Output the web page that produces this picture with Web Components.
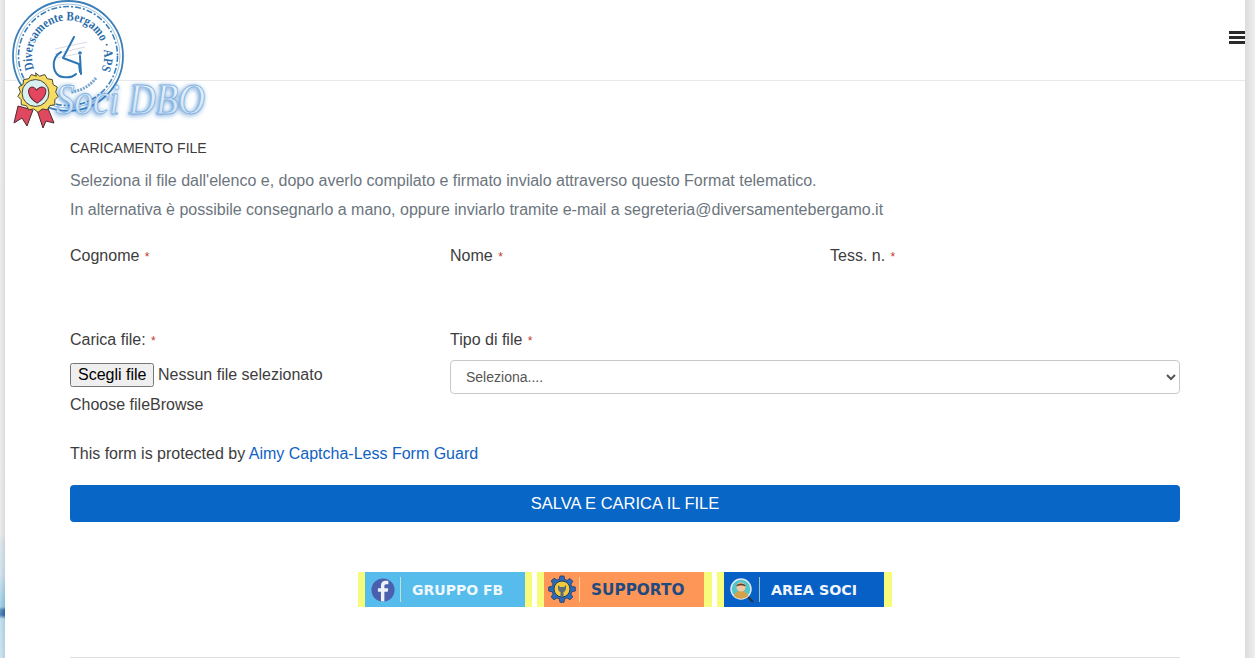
<!DOCTYPE html>
<html lang="it">
<head>
<meta charset="utf-8">
<title>Caricamento file</title>
<style>
  html, body { margin: 0; height: 100%; overflow: hidden; }
  body {
    font-family: "Liberation Sans", Arial, sans-serif;
    color: #3d3d3d;
    background: #fff;
  }
</style>
</head>
<body>
<page-shell>
  <top-bar slot="header"></top-bar>
  <upload-form></upload-form>
  <banner-row></banner-row>
</page-shell>

<script>
class PageShell extends HTMLElement {
  constructor() {
    super();
    this.attachShadow({ mode: 'open' });
    this.shadowRoot.innerHTML = `
      <style>
        :host {
          display: grid;
          grid-template-columns: 5px 1fr 10px;
          height: 658px;
          overflow: hidden;
        }
        .side-left {
          background:
            linear-gradient(90deg, rgba(255,255,255,.25), rgba(0,0,0,.05)),
            linear-gradient(180deg, #e9e9e9 0, #e6e6e6 535px, #d3dfe6 542px, #c8dbe6 575px, #a6cfe5 590px, #8cc2e0 607px, #2f6fa8 610px, #2563a8 615px, #b4d8ea 619px, #c0dcec 658px);
        }
        .side-right { background: linear-gradient(90deg, #dcdcdc, #eeeeee); }
        main { background: #fff; min-width: 0; }
        .content { padding: 0 65px; }
      </style>
      <div class="side-left"></div>
      <main>
        <slot name="header"></slot>
        <div class="content"><slot></slot></div>
      </main>
      <div class="side-right"></div>
    `;
  }
}

class TopBar extends HTMLElement {
  constructor() {
    super();
    this.attachShadow({ mode: 'open' });
    this.shadowRoot.innerHTML = `
      <style>
        :host {
          display: flex;
          justify-content: flex-end;
          align-items: center;
          height: 80px;
          border-bottom: 1px solid #e9e9e9;
          position: relative;
        }
        .logo { position: absolute; left: 0; top: 0; overflow: visible; }
        .menu { width: 16px; margin-top: -3px; }
        .menu i { display: block; height: 3px; background: #2b2b2b; margin-bottom: 2px; }
      </style>
      <svg class="logo" width="205" height="130" viewBox="0 0 205 130">
        <defs>
          <path id="ring" d="M 29.300 69 A 36 36 0 1 1 96.700 69"/>
          <filter id="glow" x="-20%" y="-40%" width="140%" height="180%">
            <feGaussianBlur stdDeviation="2.400"/>
          </filter>
          <linearGradient id="soci" x1="0" y1="0" x2="0" y2="1">
            <stop offset="0" stop-color="#f6fafd"/>
            <stop offset="1" stop-color="#c4dbf1"/>
          </linearGradient>
        </defs>
        <circle cx="63" cy="56" r="55" fill="#fff" stroke="#3d7fb8" stroke-width="1.800"/>
        <circle cx="63" cy="56" r="52" fill="none" stroke="#8ab4d8" stroke-width=".8"/>
        <circle cx="63" cy="56" r="49.500" fill="none" stroke="#3d7fb8" stroke-width="1.600" stroke-dasharray="6 2 2 2"/>
        <text font-family="Liberation Serif, serif" font-size="13" font-weight="700" fill="#2a6cab">
          <textPath href="#ring" textLength="140" lengthAdjust="spacingAndGlyphs">Diversamente Bergamo · APS</textPath>
        </text>
        <path d="M91 78 A 36 36 0 0 1 66 92" fill="none" stroke="#7ea7cc" stroke-width="3" stroke-dasharray="2 1"/>
        <g fill="none" stroke="#c2cdd8" stroke-width=".7">
          <path d="M50 49 L82 42M50 54 L80 47M52 58 L76 53"/>
        </g>
        <g fill="none" stroke="#2c75b6" stroke-width="2" stroke-linecap="round" stroke-linejoin="round">
          <path d="M69 37 L58 58 L74 64 L75 72"/>
          <path d="M56 52 C45 58 47 76 58 77 C64 78 69 76 71 74"/>
          <path d="M75 56 L76 74"/>
          <circle cx="75" cy="53" r=".8"/>
        </g>
        <text x="50" y="115" textLength="149" lengthAdjust="spacingAndGlyphs" font-family="Liberation Serif, serif" font-style="italic" font-size="45" fill="#1f6cc4" filter="url(#glow)">Soci DBO</text>
        <text x="51" y="114" textLength="149" lengthAdjust="spacingAndGlyphs" font-family="Liberation Serif, serif" font-style="italic" font-size="45" fill="url(#soci)" stroke="#7fb0e0" stroke-width=".8">Soci DBO</text>
        <path d="M13 106 L9 123 L17 118 L22 126 L28 110Z" fill="#e0485f" stroke="#4b2a30" stroke-width="1"/>
        <path d="M32 110 L38 128 L41 121 L49 123 L42 106Z" fill="#e0485f" stroke="#4b2a30" stroke-width="1"/>
        <g transform="translate(30.500 93) scale(.84) translate(-31 -97)">
          <path d="M31 73 l5 4 6-2 3 5 6 1 1 6 5 3-2 6 3 5-4 4 0 6-6 1-3 5-6-1-5 4-5-4-6 1-3-5-6-1 0-6-4-4 3-5-2-6 5-3 1-6 6-1 3-5 6 2z" fill="#f6dc62" stroke="#3d3a25" stroke-width="1.100"/>
          <circle cx="31" cy="97" r="16" fill="#d9f0f2" stroke="#3d3a25" stroke-width="1.100"/>
          <path d="M33 109 C20 101 21 90 27 90 C30 90 32 93 32 94 C33 92 37 89 40 90 C46 92 44 102 33 109Z" fill="#e4455f" stroke="#5b2730" stroke-width="1.200"/>
        </g>
      </svg>
      <div class="menu"><i></i><i></i><i></i></div>
    `;
  }
}

class FormField extends HTMLElement {
  static get observedAttributes() {
    return ['label'];
  }

  constructor() {
    super();
    this.attachShadow({ mode: 'open' });
    this.shadowRoot.innerHTML = `
      <style>
        :host { display: block; font-size: 16px; line-height: 24px; color: #3d3d3d; }
        .req { color: #c0392b; font-size: 12px; margin-left: 1px; }
        label { display: block; }
        .body { margin-top: 10px; }
      </style>
      <label><span id="text"></span> <span class="req">*</span></label>
      <div class="body"><slot></slot></div>
    `;
  }

  attributeChangedCallback(name, oldValue, newValue) {
    this.shadowRoot.getElementById('text').textContent = newValue;
  }
}

class UploadForm extends HTMLElement {
  constructor() {
    super();
    this.attachShadow({ mode: 'open' });
    this.shadowRoot.innerHTML = `
      <style>
        :host { display: block; padding-top: 57px; font-size: 16px; line-height: 24px; color: #3d3d3d; }
        h1 { margin: 0; font-size: 14px; font-weight: 400; line-height: 20px; text-transform: uppercase; color: #3d3d3d; }
        p { margin: 0; color: #6c757d; line-height: 29px; }
        .intro { margin-top: 8px; }
        .grid { display: grid; grid-template-columns: repeat(3, 350px); column-gap: 30px; }
        .first { margin-top: 20px; height: 84px; }
        .file-row { display: flex; align-items: center; gap: 4px; height: 24px; }
        button.pick { font: 16px "Liberation Sans", Arial, sans-serif; height: 24px; padding: 0 6px; width: 84px; white-space: nowrap; }
        .hint { margin-top: 6px; }
        select {
          display: block;
          width: 730px;
          height: 34px;
          margin-top: -3px;
          font: 14px "Liberation Sans", Arial, sans-serif;
          color: #555;
          background: #fff;
          border: 1px solid #c9c9c9;
          border-radius: 4px;
          padding: 0 11px;
        }
        .wide { grid-column: span 2; }
        .guard { margin-top: 25px; }
        a { color: #0f62c4; text-decoration: none; }
        .save {
          display: block;
          width: 100%;
          height: 37px;
          margin-top: 19px;
          border: 0;
          border-radius: 4px;
          background: #0866c6;
          color: #fff;
          font: 16.500px "Liberation Sans", Arial, sans-serif;
        }
      </style>
      <h1>Caricamento file</h1>
      <div class="intro">
        <p>Seleziona il file dall'elenco e, dopo averlo compilato e firmato invialo attraverso questo Format telematico.</p>
        <p>In alternativa è possibile consegnarlo a mano, oppure inviarlo tramite e-mail a segreteria@diversamentebergamo.it</p>
      </div>
      <div class="grid first">
        <form-field label="Cognome"></form-field>
        <form-field label="Nome"></form-field>
        <form-field label="Tess. n."></form-field>
      </div>
      <div class="grid">
        <form-field label="Carica file:">
          <div class="file-row"><button class="pick" type="button">Scegli file</button><span>Nessun file selezionato</span></div>
          <div class="hint">Choose fileBrowse</div>
        </form-field>
        <form-field class="wide" label="Tipo di file">
          <select><option>Seleziona....</option></select>
        </form-field>
      </div>
      <div class="guard">This form is protected by <a href="#">Aimy Captcha-Less Form Guard</a></div>
      <button class="save" type="button">SALVA E CARICA IL FILE</button>
    `;
  }
}

class BannerLink extends HTMLElement {
  constructor() {
    super();
    this.attachShadow({ mode: 'open' });
    this.shadowRoot.innerHTML = `
      <style>
        :host {
          display: flex;
          align-items: center;
          width: 160px;
          height: 35px;
          background: var(--bg);
          color: var(--fg);
          font: 700 14px "DejaVu Sans", Verdana, sans-serif;
        }
        .ico { width: 35px; height: 35px; flex: none; display: flex; align-items: center; justify-content: center; }
        .sep { width: 1px; height: 25px; background: rgba(255,255,200,.6); flex: none; }
        .txt { margin-left: 11px; white-space: nowrap; font-size: var(--fs, 14px); }
      </style>
      <div class="ico"><slot name="icon"></slot></div>
      <div class="sep"></div>
      <div class="txt"><slot></slot></div>
    `;
  }
}

class BannerRow extends HTMLElement {
  constructor() {
    super();
    this.attachShadow({ mode: 'open' });
    this.shadowRoot.innerHTML = `
      <style>
        :host { display: block; margin-top: 50px; }
        .row { display: flex; justify-content: center; gap: 5px; }
        .wrap { background: #f7fb7b; padding: 0 7px; }
        .wrap + .wrap { padding-right: 8px; }
        .line { height: 1px; background: #dedede; margin-top: 50px; }
      </style>
      <div class="row">
        <div class="wrap">
          <banner-link style="--bg:#55bcec;--fg:#eef8fd;--fs:14px">
            <svg slot="icon" width="24" height="24" viewBox="0 0 26 26">
              <circle cx="13" cy="13" r="12.500" fill="#4a5fae"/>
              <path d="M14.500 25.500V15h3.600l.6-4h-4.200V8.700c0-1.200.5-2 2-2h2.300V3.200c-.6-.1-1.800-.2-3-.2-3 0-5 1.800-5 5.100V11H7.500v4h3.300v10.200z" fill="#eef1f7"/>
            </svg>
            GRUPPO FB
          </banner-link>
        </div>
        <div class="wrap">
          <banner-link style="--bg:#fd9657;--fg:#1f4a80;--fs:15.300px">
            <svg slot="icon" width="30" height="30" viewBox="0 0 30 30">
              <path d="M13 1h4l.7 3.400 2.400 1 2.900-1.900 2.800 2.800-1.900 2.900 1 2.400L28.300 12v4l-3.400.7-1 2.400 1.900 2.900-2.800 2.800-2.900-1.900-2.400 1-.7 3.400h-4l-.7-3.400-2.400-1-2.900 1.900-2.800-2.800 1.900-2.900-1-2.400L1.700 16v-4l3.400-.7 1-2.400-1.900-2.900 2.800-2.800 2.900 1.900 2.400-1z" fill="#2e6ab5" stroke="#173d6e" stroke-width=".8"/>
              <circle cx="15" cy="14" r="8" fill="#f3c93c" stroke="#173d6e" stroke-width="1"/>
              <path d="M11 10v3c0 3 2 4 2.500 4v4h3v-4c.5 0 2.500-1 2.500-4v-3l-2 2h-4z" fill="#5c6b7a"/>
            </svg>
            SUPPORTO
          </banner-link>
        </div>
        <div class="wrap">
          <banner-link style="--bg:#0660c6;--fg:#f0f6fc;--fs:14.300px">
            <svg slot="icon" width="28" height="28" viewBox="0 0 28 28">
              <path d="M19 20l6 6" stroke="#2b3540" stroke-width="2.200"/>
              <circle cx="13" cy="13" r="10" fill="#53c5c9" stroke="#dfe8ee" stroke-width="1.500"/>
              <path d="M6 20c1-4 4-5 7-5s6 1 7 5a10 10 0 0 1-14 0z" fill="#d4a24a"/>
              <circle cx="13" cy="11" r="4.600" fill="#f3c9a5"/>
              <path d="M8.300 10.500c0-4 9.400-4 9.400 0-2-1.500-7.400-1.500-9.400 0z" fill="#6a4026"/>
            </svg>
            AREA SOCI
          </banner-link>
        </div>
      </div>
      <div class="line"></div>
    `;
  }
}

customElements.define('page-shell', PageShell);
customElements.define('top-bar', TopBar);
customElements.define('form-field', FormField);
customElements.define('upload-form', UploadForm);
customElements.define('banner-link', BannerLink);
customElements.define('banner-row', BannerRow);
</script>
</body>
</html>
